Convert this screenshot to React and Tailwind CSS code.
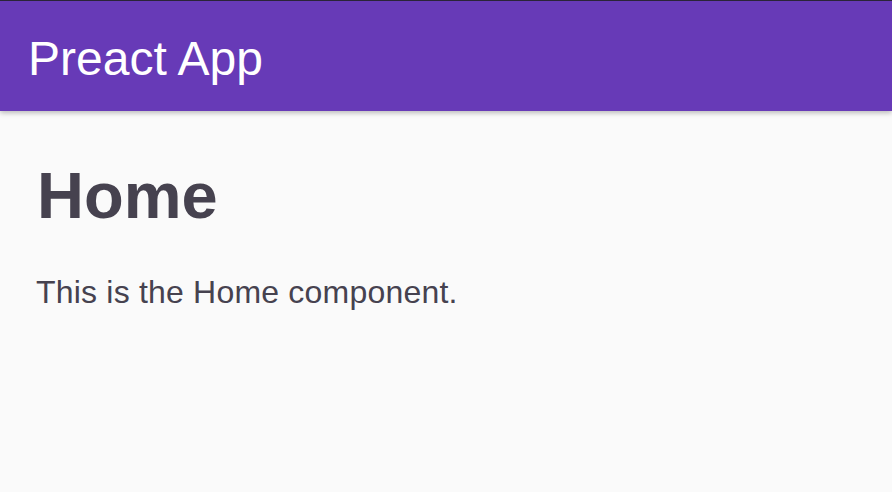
export default function App() {
  return (
    <div className="min-h-[492px] w-full bg-[#fafafa] font-['Liberation_Sans',Arial,sans-serif] overflow-hidden">
      <header className="relative z-10 flex h-[111px] items-center border-t border-[#2a2438] bg-[#673ab7] pl-[28px] shadow-[0_2px_5px_rgba(0,0,0,0.26)]">
        <h1 className="mt-[6px] text-[48px] font-normal leading-none text-white">Preact App</h1>
      </header>
      <main className="px-[36px]">
        <h1 className="mt-[52px] pl-[1px] text-[65px] font-bold leading-none text-[#46424f]">Home</h1>
        <p className="mt-[48px] text-[32px] leading-none tracking-[0.2px] text-[#46424f]">This is the Home component.</p>
      </main>
    </div>
  );
}
